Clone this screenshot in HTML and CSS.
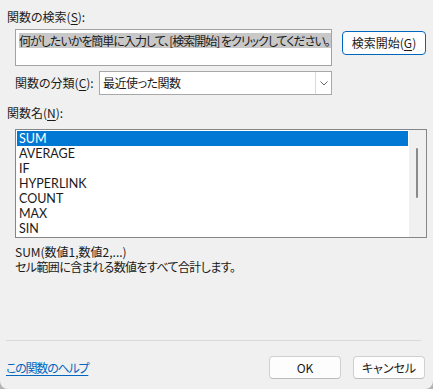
FILE: index.html
```html
<!DOCTYPE html>
<html lang="ja">
<head>
<meta charset="utf-8">
<link rel="stylesheet" href="styles.css">
</head>
<body>
<div class="dialog">
  <div class="label label-search">関数の検索(<u>S</u>):</div>
  <div class="search-row">
    <div class="search-box"><span class="sel">何がしたいかを簡単に入力して、[検索開始] をクリックしてください。</span></div>
    <button class="btn primary">検索開始(<u>G</u>)</button>
  </div>
  <div class="cat-row">
    <span class="label">関数の分類(<u>C</u>):</span>
    <div class="select">
      <span class="select-text">最近使った関数</span>
      <span class="arrow"><svg width="8" height="5" viewBox="0 0 8 5"><polyline points="0.5,0.5 4,4 7.5,0.5" fill="none" stroke="#666" stroke-width="1"/></svg></span>
    </div>
  </div>
  <div class="label label-names">関数名(<u>N</u>):</div>
  <div class="listbox">
    <ul class="items">
      <li class="selected">SUM</li>
      <li>AVERAGE</li>
      <li>IF</li>
      <li>HYPERLINK</li>
      <li>COUNT</li>
      <li>MAX</li>
      <li>SIN</li>
    </ul>
    <div class="scroll"><div class="thumb"></div></div>
  </div>
  <div class="desc">
    <div>SUM(数値1,数値2,...)</div>
    <div class="desc-jp">セル範囲に含まれる数値をすべて合計します。</div>
  </div>
  <div class="footer">
    <div class="sep"></div>
    <div class="footer-row">
      <a class="help" href="#">この関数のヘルプ</a>
      <div class="buttons">
        <button class="btn">OK</button>
        <button class="btn">キャンセル</button>
      </div>
    </div>
  </div>
</div>
</body>
</html>
```

FILE: styles.css
```css
html, body {
  margin: 0;
  padding: 0;
  background: #b4b4b4;
}
body {
  width: 433px;
  height: 389px;
  overflow: hidden;
}
.dialog {
  box-sizing: border-box;
  width: 433px;
  height: 389px;
  background: #f0f0f0;
  border-radius: 0 0 8px 8px;
  display: flex;
  flex-direction: column;
  font-family: "Noto Sans CJK JP", "Noto Sans", sans-serif;
  font-feature-settings: "palt" 1;
  font-size: 12px;
  line-height: 16px;
  color: #1a1a1a;
}
u { text-decoration-thickness: 1px; text-underline-offset: 2px; }
.label-search {
  margin: 9px 0 0 7px;
}
.search-row {
  display: flex;
  align-items: flex-start;
  margin-top: 4px;
  padding-left: 15px;
}
.search-box {
  box-sizing: border-box;
  width: 317px;
  height: 37px;
  border: 1px solid #a3a3a3;
  background: #fff;
  padding: 3px 0 0 3px;
  white-space: nowrap;
  overflow: hidden;
}
.sel {
  display: inline-block;
  background: #c8c8c8;
  line-height: 15px;
  height: 15px;
  letter-spacing: -1px;
  padding-right: 2px;
}
.btn {
  box-sizing: border-box;
  font-family: inherit;
  font-feature-settings: "palt" 1;
  font-size: 12px;
  color: #1a1a1a;
  background: #fdfdfd;
  border: 1px solid #d0d0d0;
  border-bottom-color: #bcbcbc;
  border-radius: 4px;
  width: 72px;
  height: 23px;
  padding: 0;
  line-height: 16px;
}
.primary {
  width: 84px;
  height: 24px;
  margin: 2px 0 0 10px;
  border: 1px solid #0067c0;
  background: #fff;
}
.cat-row {
  display: flex;
  align-items: center;
  margin-top: 5px;
  padding-left: 15px;
}
.cat-row .label {
  width: 84px;
}
.select {
  box-sizing: border-box;
  width: 233px;
  height: 24px;
  border: 1px solid #a8a8a8;
  background: #fff;
  display: flex;
  align-items: center;
}
.select-text {
  flex: 1;
  padding-left: 3px;
  letter-spacing: -0.5px;
}
.arrow {
  box-sizing: border-box;
  width: 16px;
  height: 22px;
  border-left: 1px solid #dadada;
  display: flex;
  align-items: center;
  justify-content: center;
}
.label-names {
  margin: 10px 0 0 7px;
}
.listbox {
  box-sizing: border-box;
  margin: 8px 0 0 15px;
  width: 412px;
  height: 109px;
  border: 1px solid #868686;
  background: #fff;
  display: flex;
}
.items {
  list-style: none;
  margin: 0;
  padding: 1px 0 0 1px;
  width: 391px;
}
.items li {
  height: 15px;
  line-height: 15px;
  padding-left: 2px;
  font-family: "Lato", "Noto Sans", sans-serif;
  font-size: 12.5px;
}
.items li.selected {
  background: #0078d4;
  color: #fff;
}
.scroll {
  margin-left: 1px;
  flex: 1;
  background: #f0f0f0;
  position: relative;
}
.thumb {
  position: absolute;
  left: 7px;
  top: 18px;
  width: 2px;
  height: 50px;
  background: #8a8a8a;
  border-radius: 1px;
}
.desc {
  margin: 6px 0 0 15px;
  line-height: 15px;
}
.desc-jp {
  letter-spacing: -0.6px;
}
.footer {
  margin-top: auto;
  padding-bottom: 10px;
}
.sep {
  height: 1px;
  background: #d9d9d9;
  margin: 0 12px 0 6px;
}
.footer-row {
  display: flex;
  align-items: center;
  justify-content: space-between;
  margin-top: 15px;
  padding: 0 8px 0 6px;
}
.help {
  color: #0067c0;
  text-decoration: underline;
  text-underline-offset: 2px;
  letter-spacing: -1.2px;
}
.buttons {
  display: flex;
  gap: 12px;
}
```
